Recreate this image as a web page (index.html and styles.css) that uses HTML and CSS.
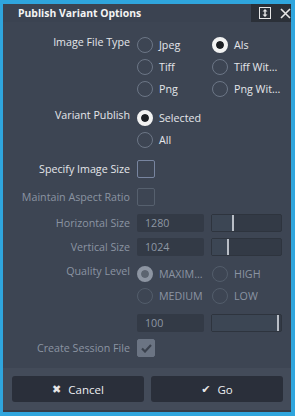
FILE: index.html
```html
<!DOCTYPE html>
<html lang="en">

<head>
    <meta charset="UTF-8">
    <meta name="viewport" content="width=device-width, initial-scale=1.0">
    <title>Publish Variant Options</title>
    <link rel="stylesheet" href="styles.css">
</head>

<body>
    <div class="window">
        <div class="titlebar">
            <span class="title">Publish Variant Options</span>
            <div class="tbtns">
                <svg width="12" height="12" viewBox="0 0 12 12">
                    <rect x="0.5" y="0.5" width="11" height="11" fill="none" stroke="#e6e6e6" stroke-width="1" />
                    <path d="M6 2 L8.5 4.5 H3.5 Z M6 10 L8.5 7.5 H3.5 Z" fill="#e6e6e6" />
                    <rect x="5.3" y="4" width="1.4" height="4" fill="#e6e6e6" />
                </svg>
                <svg width="11" height="11" viewBox="0 0 11 11">
                    <path d="M1 1 L10 10 M10 1 L1 10" stroke="#e6e6e6" stroke-width="1.6" />
                </svg>
            </div>
        </div>

        <div class="form">
            <div class="row filetype">
                <div class="label">Image File Type</div>
                <div class="radios">
                    <div class="radio"><span class="dot"></span>Jpeg</div>
                    <div class="radio on"><span class="dot"></span>Als</div>
                    <div class="radio"><span class="dot"></span>Tiff</div>
                    <div class="radio"><span class="dot"></span>Tiff Wit…</div>
                    <div class="radio"><span class="dot"></span>Png</div>
                    <div class="radio"><span class="dot"></span>Png Wit…</div>
                </div>
            </div>

            <div class="row variant">
                <div class="label">Variant Publish</div>
                <div class="radios single">
                    <div class="radio on"><span class="dot"></span>Selected</div>
                    <div class="radio"><span class="dot"></span>All</div>
                </div>
            </div>

            <div class="row center specify">
                <div class="label">Specify Image Size</div>
                <span class="check"></span>
            </div>

            <div class="row center aspect off">
                <div class="label">Maintain Aspect Ratio</div>
                <span class="check"></span>
            </div>

            <div class="row center hsize off">
                <div class="label">Horizontal Size</div>
                <div class="field">1280</div>
                <div class="slider"><span class="fill" style="width: 32%"></span></div>
            </div>

            <div class="row center vsize off">
                <div class="label">Vertical Size</div>
                <div class="field">1024</div>
                <div class="slider"><span class="fill" style="width: 25%"></span></div>
            </div>

            <div class="row quality off">
                <div class="label">Quality Level</div>
                <div class="radios">
                    <div class="radio on"><span class="dot"></span>MAXIM…</div>
                    <div class="radio"><span class="dot"></span>HIGH</div>
                    <div class="radio"><span class="dot"></span>MEDIUM</div>
                    <div class="radio"><span class="dot"></span>LOW</div>
                </div>
            </div>

            <div class="row center qvalue off">
                <div class="label"></div>
                <div class="field">100</div>
                <div class="slider"><span class="fill" style="width: 97%"></span></div>
            </div>

            <div class="row center session off">
                <div class="label">Create Session File</div>
                <span class="check checked">
                    <svg width="11" height="9" viewBox="0 0 11 9">
                        <path d="M1 4.5 L4 7.5 L10 1" fill="none" stroke="#3a414d" stroke-width="2.2" />
                    </svg>
                </span>
            </div>
        </div>

        <div class="footer">
            <button class="btn"><span class="ico">✖</span>Cancel</button>
            <button class="btn"><span class="ico">✔</span>Go</button>
        </div>
    </div>
</body>

</html>
```

FILE: styles.css
```css
* {
    margin: 0;
    padding: 0;
    box-sizing: border-box;
}

html,
body {
    width: 100%;
    height: 100%;
}

body {
    background: #2fa5dd;
    padding: 4px 4px 4px 3px;
    font-family: "Open Sans", "Noto Sans", sans-serif;
    font-size: 10.7px;
    color: #e4e6ea;
}

.window {
    height: 408px;
    background: #3d4553;
    display: flex;
    flex-direction: column;
}

.titlebar {
    height: 18px;
    display: flex;
    align-items: center;
    justify-content: space-between;
    background: #3b4351;
}

.title {
    padding-left: 15px;
    font-weight: bold;
    font-size: 10.4px;
    color: #f4f4f4;
}

.tbtns {
    height: 18px;
    width: 40px;
    background: #2b3038;
    display: flex;
    align-items: center;
    gap: 9px;
    padding-left: 8px;
}

.form {
    flex: 1;
    padding-top: 12px;
}

.row {
    display: flex;
    align-items: flex-start;
}

.row.center {
    align-items: center;
    height: 18px;
}

.label {
    width: 127px;
    margin-right: 7px;
    text-align: right;
    line-height: 16px;
    white-space: nowrap;
}

.off .label {
    color: #8b94a2;
}

.variant { margin-top: 7px; }
.specify { margin-top: 9px; }
.aspect { margin-top: 10px; }
.hsize { margin-top: 8px; }
.vsize { margin-top: 6px; }
.quality { margin-top: 7px; }
.qvalue { margin-top: 7px; }
.session { margin-top: 7px; }

.radios {
    display: grid;
    grid-template-columns: 75px 72px;
}

.radios.single {
    grid-template-columns: 147px;
}

.radio {
    height: 22px;
    display: flex;
    align-items: center;
    white-space: nowrap;
}

.dot {
    width: 16px;
    height: 16px;
    border-radius: 50%;
    border: 1.5px solid #6c7686;
    margin-right: 6px;
    flex-shrink: 0;
}

.radio.on .dot {
    background: #f2f2f2;
    border: 4.5px solid #f2f2f2;
    box-shadow: inset 0 0 0 9px #1c1f24;
}

.off .radio {
    color: #8b94a2;
}

.off .dot {
    border-color: #535d6b;
}

.off .radio.on .dot {
    background: #8d95a2;
    border: 4.5px solid #8d95a2;
    box-shadow: inset 0 0 0 9px #5c6470;
}

.check {
    width: 18px;
    height: 18px;
    border: 1px solid #7885a0;
    border-radius: 2px;
    display: flex;
    align-items: center;
    justify-content: center;
}

.off .check {
    border-color: #56606e;
}

.check.checked {
    background: #6b7483;
    border-color: #6b7483;
}

.field {
    width: 67px;
    height: 18px;
    margin-right: 7px;
    background: #333a46;
    border-radius: 2px;
    color: #8e97a4;
    line-height: 18px;
    padding-left: 8px;
}

.slider {
    width: 71px;
    height: 18px;
    background: #333a46;
    border: 1px solid #2e343e;
    border-radius: 2px;
    display: flex;
}

.fill {
    height: 100%;
    background: #3c4654;
    border-right: 2px solid #b9bec6;
}

.footer {
    height: 44px;
    background: #434b59;
    border-bottom: 2px solid #363c48;
    display: flex;
    gap: 7px;
    padding: 8px 8px 0 9px;
}

.btn {
    flex: 1;
    height: 26px;
    background: #2a2f3a;
    border: none;
    border-radius: 3px;
    color: #eceef1;
    font-family: "Open Sans", "Noto Sans", sans-serif;
    font-size: 11.5px;
    display: flex;
    align-items: center;
    justify-content: center;
}

.ico {
    font-family: "DejaVu Sans", sans-serif;
    font-size: 11px;
    margin-right: 7px;
    color: #e6e6e6;
}
```
